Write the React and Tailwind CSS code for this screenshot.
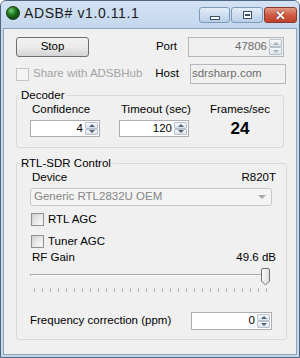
import React from 'react';

const SpinBtn = ({ up, disabled }) => (
  <div className="flex-1 flex items-center justify-center border border-[#b9c2cc] rounded-[1px] bg-gradient-to-b from-[#f6f8fa] to-[#dde3ea]">
    <div
      className={`w-0 h-0 border-x-[3px] border-x-transparent ${
        up ? 'border-b-[3px]' : 'border-t-[3px]'
      } ${disabled ? 'border-b-[#a9b1bb] border-t-[#a9b1bb]' : 'border-b-[#4f647e] border-t-[#4f647e]'}`}
    />
  </div>
);

const NumBox = ({ value, className = '', disabled }) => (
  <div
    className={`flex items-stretch border ${
      disabled ? 'border-[#b5b9bd] bg-[#f0f0f0] text-[#6d6d6d]' : 'border-[#abadb3] bg-white text-black'
    } ${className}`}
  >
    <div className="flex-1 flex items-center justify-end pr-[2px] leading-none">{value}</div>
    <div className="w-[13px] my-[1px] mr-[1px] flex flex-col">
      <SpinBtn up disabled={disabled} />
      <SpinBtn disabled={disabled} />
    </div>
  </div>
);

const Check = ({ disabled }) => (
  <div
    className={`w-[13px] h-[13px] border ${
      disabled ? 'border-[#c4c4c4] bg-[#f4f4f4]' : 'border-[#8e8f8f] bg-gradient-to-br from-[#cfcfcf] to-[#fbfbfb]'
    }`}
  >
    {!disabled && <div className="m-[2px] h-[7px] bg-gradient-to-br from-[#dadada] to-[#f8f8f8]" />}
  </div>
);

const Group = ({ title, className = '', children }) => (
  <fieldset className={`border border-[#d5d9dd] rounded-[3px] pl-[13px] ${className}`}>
    <legend className="ml-[-11px] px-[2px] leading-[14px]">{title}</legend>
    {children}
  </fieldset>
);

const Slider = () => {
  const ticks = Array.from({ length: 30 }, (_, i) => 6 + i * 8);
  return (
    <svg width="244" height="28" viewBox="0 0 244 28" className="ml-[-2px] mt-[2px] block">
      <defs>
        <linearGradient id="thumbGrad" x1="0" y1="0" x2="1" y2="0">
          <stop offset="0%" stopColor="#fdfdfd" />
          <stop offset="100%" stopColor="#dcdcdc" />
        </linearGradient>
      </defs>
      <line x1="2" y1="8.5" x2="240" y2="8.5" stroke="#a9a9a9" />
      <line x1="2" y1="9.5" x2="240" y2="9.5" stroke="#ffffff" />
      <line x1="2.5" y1="8" x2="2.5" y2="10" stroke="#a9a9a9" />
      {ticks.map((x) => (
        <line key={x} x1={x + 0.5} y1="22" x2={x + 0.5} y2="26" stroke="#b0b0b0" />
      ))}
      <path
        d="M233.5,4 Q233.5,2.5 235,2.5 H240 Q241.5,2.5 241.5,4 V15 L237.5,19 L233.5,15 Z"
        fill="url(#thumbGrad)"
        stroke="#707070"
      />
    </svg>
  );
};

const CaptionBtn = ({ children, className = '' }) => (
  <div className={`h-[16px] flex items-center justify-center rounded-[3px] border ${className}`}>{children}</div>
);

export default function App() {
  return (
    <div className="w-[300px] h-[358px] flex flex-col border border-[#4f6580] rounded-t-[6px] bg-[#c3d7ed] font-['Liberation_Sans',Arial,sans-serif] text-[11.5px] text-black overflow-hidden">
      {/* Title bar */}
      <div className="h-[27px] flex items-start bg-gradient-to-b from-[#d3e2f3] to-[#c3d7ed]">
        <div className="ml-[5px] mt-[5px] w-[14px] h-[14px] rounded-full border border-[#163a16] bg-[radial-gradient(circle_at_35%_30%,#6fd06f,#1b6b1b_45%,#0a2f0a)]" />
        <div className="ml-[4px] mt-[4px] text-[14px] leading-[16px] tracking-[0.6px] text-[#1b1b1b]">ADSB# v1.0.11.1</div>
        <div className="ml-auto mr-[2px] mt-[6px] flex gap-[1px]">
          <CaptionBtn className="w-[31px] border-[#7d99b8] bg-gradient-to-b from-[#e3edf8] to-[#b9cfe7]">
            <div className="mt-[5px] w-[10px] h-[4px] border border-[#3c4f66] bg-white" />
          </CaptionBtn>
          <CaptionBtn className="w-[32px] border-[#7d99b8] bg-gradient-to-b from-[#e3edf8] to-[#b9cfe7]">
            <div className="w-[9px] h-[8px] border border-[#3c4f66] bg-white flex items-center justify-center">
              <div className="w-[5px] h-[2px] border border-[#3c4f66]" />
            </div>
          </CaptionBtn>
          <CaptionBtn className="w-[33px] border-[#8a3a2c] bg-gradient-to-b from-[#e39a86] via-[#cf5a43] to-[#c0402c]">
            <span className="text-white font-bold text-[13px] leading-none [text-shadow:0_0_1px_#5a1d12,0_0_1px_#5a1d12]">
              ✕
            </span>
          </CaptionBtn>
        </div>
      </div>

      {/* Client area */}
      <div className="flex-1 mx-[2px] mb-[2px] border border-[#8ea2ba] bg-[#f0f0f0] flex flex-col">
        {/* Row 1 */}
        <div className="mt-[8px] h-[20px] flex items-center">
          <button className="ml-[12px] w-[73px] h-[20px] rounded-[3px] border border-[#707070] bg-gradient-to-b from-[#f2f2f2] via-[#ebebeb] to-[#d3d3d3] leading-none">
            Stop
          </button>
          <div className="w-[88px] text-right">Port</div>
          <NumBox value="47806" disabled className="ml-[11px] w-[96px] h-[20px]" />
        </div>

        {/* Row 2 */}
        <div className="mt-[7px] h-[20px] flex items-center">
          <div className="ml-[12px]">
            <Check disabled />
          </div>
          <div className="ml-[4px] text-[#a3a3a3] whitespace-nowrap">Share with ADSBHub</div>
          <div className="ml-[13px]">Host</div>
          <div className="ml-[11px] w-[96px] h-[20px] border border-[#b5b9bd] bg-[#f0f0f0] text-[#6d6d6d] flex items-center pl-[1px]">
            sdrsharp.com
          </div>
        </div>

        {/* Decoder */}
        <Group title="Decoder" className="mt-[4px] mx-[12px] pb-[10px]">
          <div className="flex whitespace-nowrap">
            <div className="w-[70px] flex flex-col">
              <div className="ml-[2px] leading-[14px]">Confidence</div>
              <NumBox value="4" className="mt-[4px] h-[17px]" />
            </div>
            <div className="ml-[19px] w-[70px] flex flex-col">
              <div className="ml-[2px] leading-[14px]">Timeout (sec)</div>
              <NumBox value="120" className="mt-[4px] h-[17px]" />
            </div>
            <div className="ml-[20px] w-[62px] flex flex-col items-center">
              <div className="leading-[14px]">Frames/sec</div>
              <div className="mt-[4px] h-[17px] flex items-center font-bold text-[17px] leading-none">24</div>
            </div>
          </div>
        </Group>

        {/* RTL-SDR Control */}
        <Group title="RTL-SDR Control" className="mt-[8px] mx-[12px] pb-[9px] pr-[14px]">
          <div className="flex justify-between leading-[14px] ml-[2px] mr-[-4px]">
            <span>Device</span>
            <span>R820T</span>
          </div>
          <div className="mt-[4px] h-[18px] rounded-[3px] border border-[#c7c7c7] bg-[#f4f4f4] flex items-center pl-[3px] text-[#858585]">
            <span>Generic RTL2832U OEM</span>
            <div className="ml-auto mr-[5px] w-0 h-0 border-x-[4px] border-x-transparent border-t-[4px] border-t-[#a8a8a8]" />
          </div>
          <div className="mt-[7px] h-[13px] flex items-center">
            <div className="ml-[1px]">
              <Check />
            </div>
            <span className="ml-[4px]">RTL AGC</span>
          </div>
          <div className="mt-[9px] h-[13px] flex items-center">
            <div className="ml-[1px]">
              <Check />
            </div>
            <span className="ml-[4px]">Tuner AGC</span>
          </div>
          <div className="mt-[2px] flex justify-between leading-[14px] ml-[2px] mr-[-4px]">
            <span>RF Gain</span>
            <span>49.6 dB</span>
          </div>
          <Slider />
          <div className="mt-[18px] h-[18px] flex items-center justify-between">
            <span>Frequency correction (ppm)</span>
            <NumBox value="0" className="w-[81px] h-[18px]" />
          </div>
        </Group>
      </div>
    </div>
  );
}
